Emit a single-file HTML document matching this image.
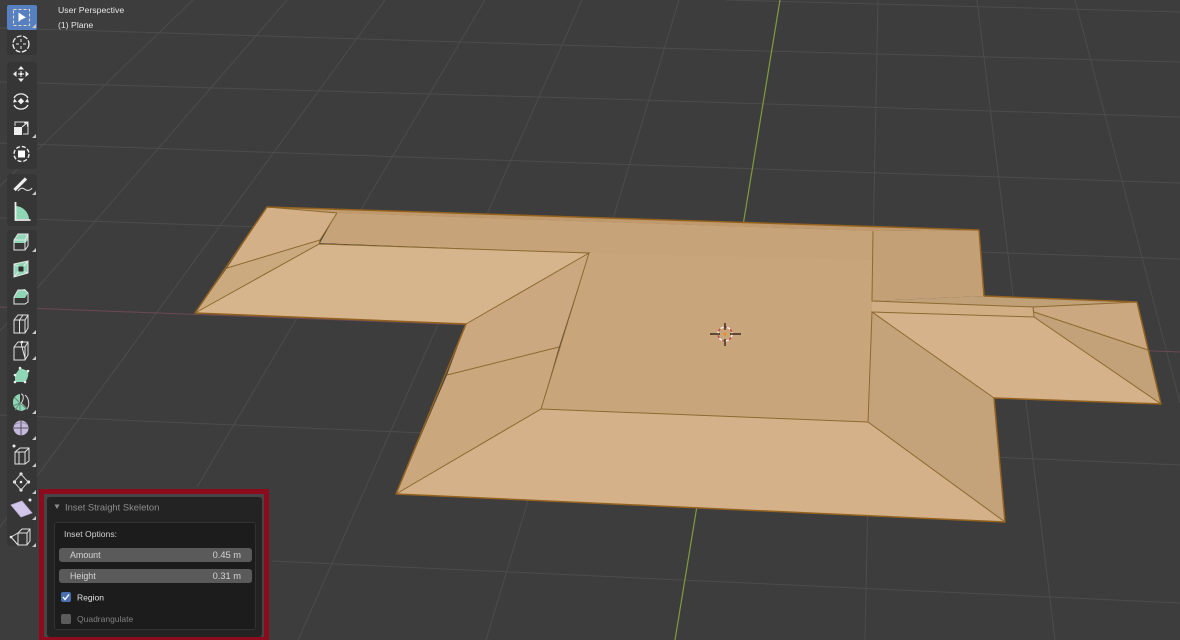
<!DOCTYPE html>
<html><head><meta charset="utf-8"><style>
html,body{margin:0;padding:0;background:#3d3d3d;width:1180px;height:640px;overflow:hidden}
svg{display:block;position:absolute;left:0;top:0;filter:blur(.35px)}
text{font-family:"Liberation Sans",sans-serif}
</style></head><body>
<svg width="1180" height="640" viewBox="0 0 1180 640" xmlns="http://www.w3.org/2000/svg">
<rect width="1180" height="640" fill="#3d3d3d"/>
<!-- grid -->
<g stroke="#4c4c4c" stroke-width="1" fill="none">
<path d="M0 28L726 50L1180 62M726 0L1180 12"/>
<path d="M0 82L610 99L1180 117"/>
<path d="M0 143L610 164L1180 183"/>
<path d="M0 218L1180 259"/>
<path d="M0 415L1180 465"/>
<path d="M272 561L1180 603"/>
<path d="M193 0L0 186M287 0L0 331M385 0L0 527M485 0L197 487M582 0L298 640M679 0L486 640M878 0L865 640M977 0L1055 640M1075 0L1180 403"/>
</g>
<path d="M0 307L1180 352" stroke="#6a4a52" stroke-width="1" fill="none"/>
<path d="M780 0L675 640" stroke="#7f9c3e" stroke-width="1.2" fill="none"/>
<!-- mesh -->
<g stroke="none">
<polygon points="267,207 979,230 873,231 337,213" fill="#c09a6c"/>
<polygon points="337,213 873,231 872,301 872,312 868,422 541,409 589,253 320,243" fill="#c9a57c"/>
<polygon points="337,213 873,231 872,260 589,253 320,243" fill="#c6a379"/>
<polygon points="873,231 979,230 984,296 872,301" fill="#c3a076"/>
<polygon points="872,301 984,296 1137,302 1033,307" fill="#c0a076"/>
<polygon points="872,301 1033,307 1034,317 872,312" fill="#d2ae85"/>
<polygon points="1033,307 1137,302 1148,350 1034,312" fill="#cba87f"/>
<polygon points="1034,312 1148,350 1161,404 1034,317" fill="#c4a279"/>
<polygon points="872,312 1034,317 1161,404 994,398" fill="#d5b28a"/>
<polygon points="872,312 994,398 1005,522 868,422" fill="#c4a27a"/>
<polygon points="541,409 868,422 1005,522 396,494" fill="#d4b189"/>
<polygon points="589,253 466,324 447,375 559,347" fill="#cca880"/>
<polygon points="559,347 447,375 396,494 541,409" fill="#cba77e"/>
<polygon points="319,244 589,253 466,324 195,313" fill="#d6b58d"/>
<polygon points="267,207 337,213 320,240 227,268" fill="#d3b087"/>
<polygon points="227,268 320,240 319,244 195,313" fill="#ccaa80"/>
</g>
<g stroke="#8d6a30" stroke-width="1" fill="none">
<path d="M337 213L320 240L227 268M320 240L319 244L195 313M319 244L589 253L466 324M589 253L541 409L396 494M559 347L447 375M541 409L868 422L1005 522M868 422L872 312L994 398M872 312L1034 317L1161 404M1034 317L1033 307L872 301L873 231M1033 307L1137 302M1034 312L1148 350M267 207L337 213"/>
</g>
<polygon points="267,207 979,230 984,296 1137,302 1161,404 994,398 1005,522 396,494 466,324 195,313" fill="none" stroke="#94621f" stroke-width="1.5" stroke-linejoin="round"/>
<!-- 3D cursor -->
<g fill="none">
<circle cx="725" cy="334" r="7" stroke="#f4f0ea" stroke-width="1.4" stroke-dasharray="4 3"/>
<circle cx="725" cy="334" r="7" stroke="#c4453a" stroke-width="1.4" stroke-dasharray="3 4" stroke-dashoffset="3.5"/>
<path d="M710 334H720M730 334H741M725 323V330M725 339V346" stroke="#3a2a1c" stroke-width="1.4"/>
<circle cx="725" cy="334" r="1.8" fill="#e8922c"/>
</g>
<!-- header text -->
<text x="58" y="13" font-size="8.7" fill="#e6e6e6">User Perspective</text>
<text x="58" y="28" font-size="8.7" fill="#e6e6e6">(1) Plane</text>
<!-- toolbar -->
<g fill="#363636">
<rect x="7" y="5" width="30" height="50" rx="3"/>
<rect x="7" y="62" width="30" height="107" rx="3"/>
<rect x="7" y="174" width="30" height="52" rx="3"/>
<rect x="7" y="230" width="30" height="316" rx="3"/>
</g>
<rect x="7" y="5" width="30" height="25" rx="2" fill="#5680c2"/>
<!-- select -->
<rect x="13.5" y="9.5" width="16" height="16" fill="none" stroke="#e8dcb8" stroke-width="1.1" stroke-dasharray="3 2"/>
<path d="M18.5 12.5V22L21 19.8L26 17.5Z" fill="#fff"/>
<!-- cursor -->
<g fill="none" stroke="#eee" stroke-width="1.3">
<circle cx="21" cy="44" r="8" stroke-dasharray="5 1.6"/>
<path d="M21 39V42M21 46V49M16 44H19M23 44H26" stroke-width="1"/>
</g>
<!-- move -->
<g fill="#eee">
<path d="M21 66l3 3.5h-6zM21 82l3-3.5h-6zM13 74l3.5-3v6zM29 74l-3.5-3v6z"/>
<circle cx="21" cy="74" r="1.4"/>
<path d="M18 74h1.5M22.5 74h1.5M21 71v1.5M21 75.5v1.5" stroke="#eee"/>
</g>
<!-- rotate -->
<g fill="none" stroke="#eee" stroke-width="1.3">
<path d="M14 98a8 8 0 0 1 14 0M14 105a8 8 0 0 0 14 0"/>
</g>
<path d="M21 98l3.2 3.2L21 104.400l-3.200-3.200zM13 102.500l1.500-4 2.500 3.500zM29 102.500l-1.500-4-2.500 3.500z" fill="#eee"/>
<!-- scale -->
<path d="M15 126V122H28V134H23" fill="none" stroke="#ddd" stroke-width="1"/>
<rect x="14" y="127" width="8" height="8" fill="#eee"/>
<path d="M22 127L27 123M24 123H27.500V126.500" fill="none" stroke="#eee" stroke-width="1.1"/>
<!-- transform -->
<circle cx="21.500" cy="154" r="7.500" fill="none" stroke="#eee" stroke-width="1.400" stroke-dasharray="4 1.900"/>
<rect x="18" y="150.500" width="7" height="7" fill="#fff"/>
<!-- annotate -->
<path d="M14.500 190L26 178.500" stroke="#eee" stroke-width="3.200" fill="none"/>
<path d="M18 191C22 186 24 189 26 190S31 190 32 188" stroke="#ddd" stroke-width="1.100" fill="none"/>
<!-- measure -->
<path d="M16 206A14 14 0 0 1 29 219H16Z" fill="#8fd6b6"/>
<path d="M15.500 202V220H30.500" fill="none" stroke="#eee" stroke-width="1.800"/>
<!-- extrude -->
<polygon points="14,240 18,234 28,234 25,240" fill="#8fd6b6"/>
<polygon points="14,240 25,240 28,234 28,240 25,243 14,243" fill="#8fd6b6"/>
<path d="M14 240L18 234H28V246L25 250H14ZM14 240H25V250M25 240L28 234" fill="none" stroke="#e6e6e6" stroke-width="1"/>
<!-- inset -->
<polygon points="14,264 28,261 28,273 14,277" fill="#8fd6b6"/>
<rect x="18.500" y="266.500" width="5" height="5" fill="#2c2c2c"/>
<path d="M14 264L28 261V273L14 277ZM14 264L18.500 266.500M28 261L23.500 266.500M28 273L23.500 271.500M14 277L18.500 271.500" fill="none" stroke="#e6e6e6" stroke-width="1"/>
<!-- bevel -->
<polygon points="18,290 25,289 28,293 25,298 14,298" fill="#8fd6b6"/>
<path d="M14 297L18 290H25L28 293V302L25 304H14Z" fill="none" stroke="#e6e6e6" stroke-width="1"/>
<!-- loop cut -->
<path d="M14 320L18 315H28V328L25 333H14ZM14 320H25V333M25 320L28 315M19.500 320V333M19.500 320L23 315" fill="none" stroke="#e2e2e2" stroke-width="1"/>
<!-- knife -->
<path d="M14 347L18 342H28V355L25 360H14ZM14 347H25V360M25 347L28 342M21 342L22 347L25 358" fill="none" stroke="#e2e2e2" stroke-width="1"/>
<circle cx="22" cy="342" r="1.300" fill="#eee"/>
<!-- poly build -->
<path d="M20 368L28 371C29 376 27 380 25 382H15L15 375Z" fill="#8fd6b6"/>
<g fill="#eee"><circle cx="20" cy="368" r="1.300"/><circle cx="28" cy="371" r="1.300"/><circle cx="15" cy="382" r="1.300"/><circle cx="15" cy="375" r="1.300"/><circle cx="25" cy="382" r="1.300"/></g>
<!-- spin -->
<path d="M20 396V403H13A8 8 0 0 1 20 394ZM20 403H13A8 8 0 0 0 26 409Z" fill="#8fd6b6"/>
<path d="M21 394C24 394 24 400 21 403L27 409C30 405 29 398 25 395" fill="none" stroke="#dfdfdf" stroke-width="1"/>
<path d="M20 403L27 409M20 403L15 410M20 403V411M20 403L13 406M20 403L14 397" stroke="#5d8f78" stroke-width="1"/>
<!-- smooth -->
<circle cx="21" cy="428" r="7.500" fill="#c4b8dd"/>
<path d="M14 428H28M21 420.500V435.500" stroke="#3d3d3d" stroke-width=".8" fill="none"/>
<path d="M14 425C18 422 24 422 28 425" stroke="#8a80a0" stroke-width=".8" fill="none"/>
<!-- edge slide -->
<path d="M15 452L20 448H29V461L25 464H15ZM15 452H25V464M25 452L29 448M19 452V464" fill="none" stroke="#e2e2e2" stroke-width="1"/>
<circle cx="14" cy="446" r="1.500" fill="#eee"/>
<!-- shrink -->
<g fill="#eee">
<circle cx="21" cy="474" r="1.600"/><circle cx="14.500" cy="482" r="1.600"/><circle cx="28.500" cy="482" r="1.600"/><circle cx="21" cy="490" r="1.600"/><circle cx="21" cy="482" r="1.300"/>
</g>
<path d="M21 474L28 482L21 490L14 482Z" fill="none" stroke="#cfcfcf" stroke-width="1"/>
<!-- shear -->
<polygon points="11,505 22,501 32,513 21,517" fill="#d2c6ea"/>
<path d="M11 505L22 501L32 513L21 517Z" fill="none" stroke="#b8acd0" stroke-width=".8"/>
<circle cx="30" cy="500" r="1.500" fill="#eee"/>
<!-- rip -->
<path d="M18 533L22 529H30V541L27 545H18ZM18 533H27V545M27 533L30 529" fill="none" stroke="#e2e2e2" stroke-width="1"/>
<path d="M11 537L18 533M11 537L18 545" fill="none" stroke="#e2e2e2" stroke-width="1"/>
<circle cx="11" cy="537" r="1.300" fill="#eee"/>
<!-- menu corner triangles -->
<g fill="#c8c8c8">
<path d="M36 24v4h-4zM36 134v4h-4zM36 191v4h-4zM36 248v4h-4zM36 330v4h-4zM36 356v4h-4zM36 410v4h-4zM36 436v4h-4zM36 463v4h-4zM36 490v4h-4zM36 516v4h-4zM36 543v4h-4z"/>
</g>
<!-- red frame + panel -->
<rect x="39" y="489" width="230" height="151" fill="#8c0b1d"/>
<rect x="44" y="494" width="220" height="143" fill="#454545"/>
<rect x="47" y="497" width="215" height="140" rx="3" fill="#232323"/>
<path d="M54.500 504.500h5l-2.500 4.500z" fill="#8e8e8e"/>
<text x="65" y="510.500" font-size="9.400" fill="#8e8e8e">Inset Straight Skeleton</text>
<rect x="54.500" y="522.500" width="201" height="107" rx="2.500" fill="#1c1c1c" stroke="#323232"/>
<text x="64" y="537" font-size="8.600" fill="#d2d2d2">Inset Options:</text>
<rect x="59" y="548" width="193" height="14" rx="3" fill="#5a5a5a"/>
<text x="70" y="558" font-size="8.900" fill="#d4d4d4">Amount</text>
<text x="241" y="558" font-size="9.300" fill="#d4d4d4" text-anchor="end">0.45 m</text>
<rect x="59" y="569" width="193" height="14" rx="3" fill="#5a5a5a"/>
<text x="70" y="579" font-size="8.900" fill="#d4d4d4">Height</text>
<text x="241" y="579" font-size="9.300" fill="#d4d4d4" text-anchor="end">0.31 m</text>
<rect x="61" y="592" width="10" height="10" rx="2" fill="#4a6fae"/>
<path d="M63 597l2 2.500l4-5" fill="none" stroke="#fff" stroke-width="1.400"/>
<text x="77" y="600.500" font-size="8.500" fill="#e2e2e2">Region</text>
<rect x="61" y="614" width="10" height="10" rx="2" fill="#5c5c5c"/>
<text x="77" y="622" font-size="8.500" fill="#808080">Quadrangulate</text>
</svg>
</body></html>
